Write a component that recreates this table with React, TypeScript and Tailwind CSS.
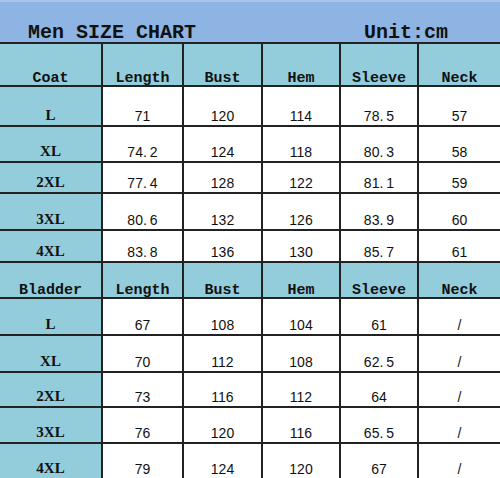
const coat = [
  ["L", "71", "120", "114", "78.5", "57"],
  ["XL", "74.2", "124", "118", "80.3", "58"],
  ["2XL", "77.4", "128", "122", "81.1", "59"],
  ["3XL", "80.6", "132", "126", "83.9", "60"],
  ["4XL", "83.8", "136", "130", "85.7", "61"],
];

const bladder = [
  ["L", "67", "108", "104", "61", "/"],
  ["XL", "70", "112", "108", "62.5", "/"],
  ["2XL", "73", "116", "112", "64", "/"],
  ["3XL", "76", "120", "116", "65.5", "/"],
  ["4XL", "79", "124", "120", "67", "/"],
];

const heads = ["Length", "Bust", "Hem", "Sleeve", "Neck"];

// decimal point in the chart font is half-width, so pad after it
function Num({ v }: { v: string }) {
  const [a, b] = v.split(".");
  if (b === undefined) return <>{v}</>;
  return (
    <>
      {a}
      <span className="mr-[3px]">.</span>
      {b}
    </>
  );
}

function HeadRow({ first }: { first: string }) {
  return (
    <>
      {[first, ...heads].map((h) => (
        <div
          key={h}
          className="flex items-end justify-center bg-[#93cddc] font-['Liberation_Mono',monospace] text-[15px] font-bold leading-[12px] text-[#111]"
        >
          {h}
        </div>
      ))}
    </>
  );
}

function DataRow({ row }: { row: string[] }) {
  return (
    <>
      <div className="flex items-end justify-center bg-[#93cddc] pb-[1px] font-['Liberation_Serif',serif] text-[15px] font-bold leading-[18px] text-[#111]">
        {row[0]}
      </div>
      {row.slice(1).map((v, i) => (
        <div
          key={i}
          className="flex items-end justify-center bg-white pb-[1px] font-['Liberation_Sans',sans-serif] text-[14px] leading-[16px] text-[#111]"
        >
          <Num v={v} />
        </div>
      ))}
    </>
  );
}

export default function App() {
  return (
    <div className="h-[478px] w-[500px] overflow-hidden bg-white">
      <div className="flex h-[42px] items-end border-t-2 border-[#a9c4e6] bg-[#8db4e2] font-['Liberation_Mono',monospace] text-[20px] font-bold leading-[18px] text-[#111]">
        <span className="ml-[28px]">Men SIZE CHART</span>
        <span className="ml-[168px]">Unit:cm</span>
      </div>
      <div className="grid grid-cols-[101px_79px_77px_76px_76px_81px] grid-rows-[41px_38px_34px_29px_35px_30px_34px_35px_35px_33px_34px_34px] gap-[2px] border-t-2 border-[#222] bg-[#222]">
        <HeadRow first="Coat" />
        {coat.map((r) => (
          <DataRow key={"c" + r[0]} row={r} />
        ))}
        <HeadRow first="Bladder" />
        {bladder.map((r) => (
          <DataRow key={"b" + r[0]} row={r} />
        ))}
      </div>
    </div>
  );
}
